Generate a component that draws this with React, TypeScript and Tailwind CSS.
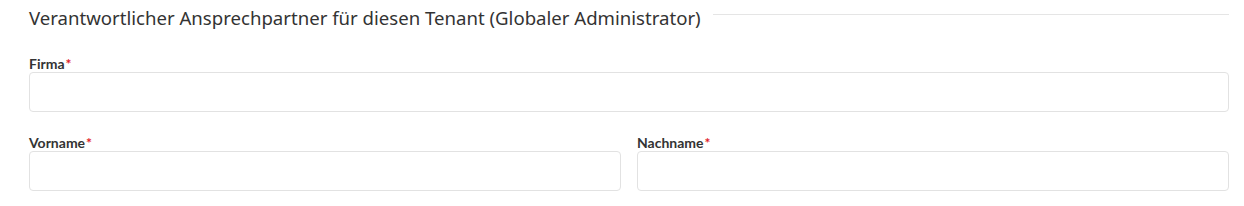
export default function App() {
  return (
    <div className="w-[1244px] bg-white pl-[29px] pr-[15px] pt-[4px] pb-[15px] font-['Lato',sans-serif] text-[#333]">
      <div className="flex items-center gap-3">
        <h2 className="font-['Noto_Sans',sans-serif] text-[18.6px] leading-[28px] text-[#333] shrink-0">
          Verantwortlicher Ansprechpartner für diesen Tenant (Globaler Administrator)
        </h2>
        <div className="h-px flex-1 bg-[#e5e5e5] -mt-[8px]" />
      </div>

      <div className="mt-[23px]">
        <Field label="Firma" />
      </div>

      <div className="mt-[22px] grid grid-cols-2 gap-[16px]">
        <Field label="Vorname" />
        <Field label="Nachname" />
      </div>
    </div>
  );
}

function Field({ label }: { label: string }) {
  return (
    <label className="block">
      <span className="block text-[14px] font-bold leading-[17px] text-[#333]">
        {label}
        <span className="ml-[1px] text-[#e11d2a]">*</span>
      </span>
      <input className="block h-[40px] w-full rounded-[4px] border border-[#e2e2e2] bg-white px-3 outline-none" />
    </label>
  );
}
